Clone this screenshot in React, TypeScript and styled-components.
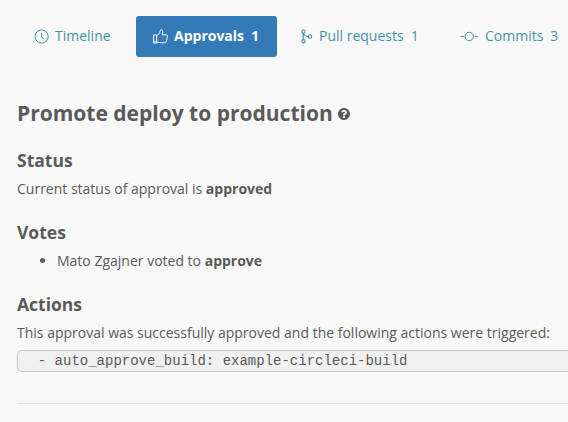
import React from 'react';
import styled, { createGlobalStyle } from 'styled-components';

const Global = createGlobalStyle`
  * { box-sizing: border-box; }
  html, body { margin: 0; background: #f8f8f8; }
  body { font: 14px/20px "Open Sans", sans-serif; color: #5a5a5a; }
`;

const Page = styled.div`
  padding: 16px 0 18px 17px;
`;

const Tabs = styled.nav`
  display: flex;
  gap: 7px;
`;

const Tab = styled.a<{ $active?: boolean; $width: number; $gap?: number }>`
  display: flex;
  flex: none;
  align-items: center;
  width: ${(p) => p.$width}px;
  height: 41px;
  padding: 0 0 1px 17px;
  border-radius: 3px;
  white-space: nowrap;
  background: ${(p) => (p.$active ? '#337ab7' : 'transparent')};
  color: ${(p) => (p.$active ? '#fff' : '#4693a8')};
  font-weight: ${(p) => (p.$active ? 700 : 400)};
  svg { flex: none; margin-right: ${(p) => p.$gap ?? 6}px; }
`;

const Count = styled.span`
  margin-left: 7px;
`;

const Title = styled.h1`
  display: flex;
  align-items: center;
  gap: 5px;
  margin: 41px 0 0;
  font-size: 21px;
  line-height: 30px;
  svg { margin-top: 2px; }
`;

const Heading = styled.h2`
  margin: 20px 0 6px;
  font-size: 17.5px;
  line-height: 26px;
  h1 + & { margin-top: 19px; }
`;

const Text = styled.p`
  margin: 0;
  white-space: nowrap;
`;

const List = styled.ul`
  margin: 0;
  padding-left: 40px;
`;

const Code = styled.pre`
  margin: 7px 0 0;
  height: 22px;
  padding: 0 3px;
  border: 1px solid #c8c8c8;
  border-right: 0;
  border-radius: 5px 0 0 5px;
  background: #f0f0f0;
  font: 14px/20px "Liberation Mono", monospace;
`;

const Rule = styled.hr`
  margin: 31px 0 0;
  border: 0;
  border-top: 1px solid #ddd;
`;

const stroke = { fill: 'none', stroke: 'currentColor', strokeWidth: 1 };

const ClockIcon = () => (
  <svg width="15" height="15" viewBox="0 0 15 15" {...stroke}>
    <circle cx="7.6" cy="7.5" r="6.6" />
    <path d="M7.500 3.800v4.200l2.200 1.500" />
  </svg>
);
const ThumbIcon = () => (
  <svg width="15" height="15" viewBox="0 0 15 15" {...stroke} strokeLinejoin="round">
    <path d="M.6 5.900h3v8.100h-3zM3.600 7.300l2.600-2.900c.8-.8.7-3.600 2-3.700 2.200 0 1.700 3.200.8 5.100h4.200c1.500 0 1.600 1.800.6 2.200.7.600.5 1.600-.2 2 .5.700.2 1.500-.5 1.900.3 1-.3 1.900-1.300 1.900H8.200c-1.700 0-2.700-.8-4.600-.8" />
    <path d="M2 12v1" />
  </svg>
);
const BranchIcon = () => (
  <svg width="12" height="15" viewBox="0 0 12 15" {...stroke} strokeWidth={1.1}>
    <circle cx="2.500" cy="2.400" r="1.600" />
    <circle cx="2.500" cy="12.200" r="1.600" />
    <circle cx="9" cy="7.500" r="1.700" />
    <path d="M2.200 4v6.600M2.500 4.300c.7 2.200 2.200 3 4.800 3.200" />
  </svg>
);
const CommitIcon = () => (
  <svg width="18" height="15" viewBox="0 0 18 15" {...stroke}>
    <circle cx="9.200" cy="7.500" r="4.200" />
    <path d="M.4 7.500h3.500M14.500 7.500H18" />
  </svg>
);
const HelpIcon = () => (
  <svg width="12" height="12" viewBox="8 8 496 496" fill="currentColor">
    <path d="M504 256c0 137-111 248-248 248S8 393 8 256 119 8 256 8s248 111 248 248zM262.700 90c-54.500 0-89.300 23-116.500 63.800-3.500 5.300-2.400 12.400 2.700 16.300l34.700 26.300c5.200 3.900 12.600 3 16.700-2.100 17.900-22.700 30.100-35.800 57.300-35.800 20.400 0 45.700 13.100 45.700 33 0 15-12.400 22.700-32.500 34C247.100 238.500 216 254.900 216 296v4c0 6.600 5.400 12 12 12h56c6.600 0 12-5.400 12-12v-1.300c0-28.500 83.200-29.600 83.200-106.700 0-58-60.200-102-116.500-102zM256 338c-25.400 0-46 20.600-46 46s20.600 46 46 46 46-20.600 46-46-20.600-46-46-46z" />
  </svg>
);

export default function App() {
  return (
    <Page>
      <Global />
      <Tabs>
        <Tab $width={112}><ClockIcon />Timeline</Tab>
        <Tab $active $width={141}><ThumbIcon />Approvals<Count>1</Count></Tab>
        <Tab $width={152}><BranchIcon />Pull requests<Count>1</Count></Tab>
        <Tab $width={125} $gap={7}><CommitIcon />Commits<Count>3</Count></Tab>
      </Tabs>
      <Title>Promote deploy to production <HelpIcon /></Title>
      <Heading>Status</Heading>
      <Text>Current status of approval is <b>approved</b></Text>
      <Heading>Votes</Heading>
      <List><li>Mato Zgajner voted to <b>approve</b></li></List>
      <Heading>Actions</Heading>
      <Text>This approval was successfully approved and the following actions were triggered:</Text>
      <Code>{'  - auto_approve_build: example-circleci-build'}</Code>
      <Rule />
    </Page>
  );
}
